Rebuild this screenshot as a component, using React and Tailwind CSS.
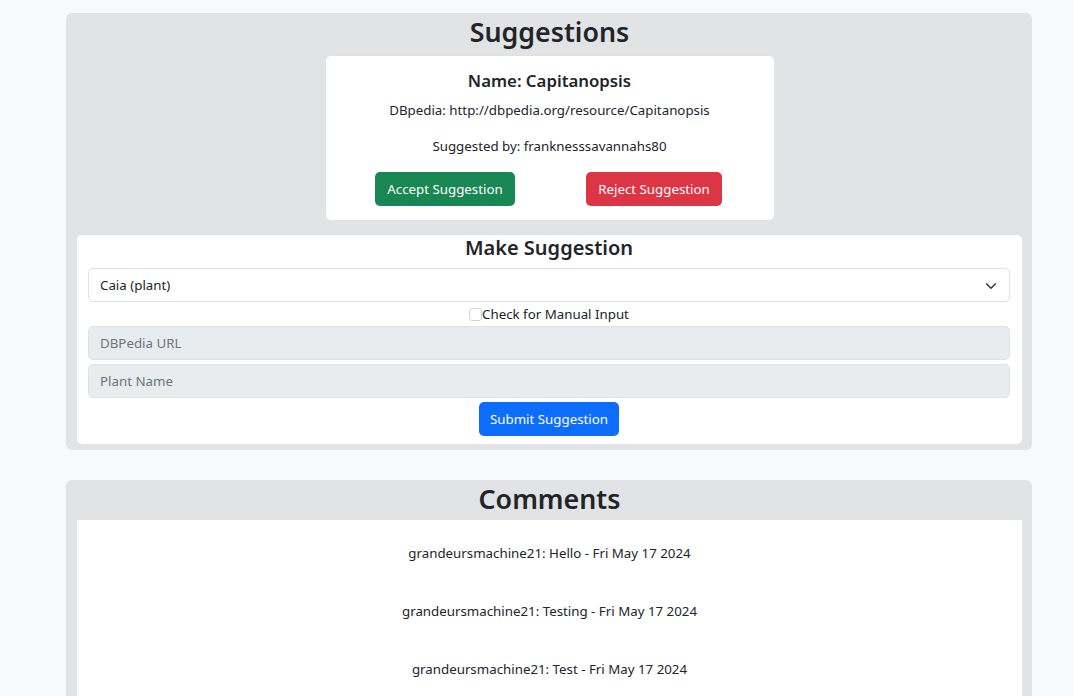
import React from 'react';

const comments = [
  'grandeursmachine21: Hello - Fri May 17 2024',
  'grandeursmachine21: Testing - Fri May 17 2024',
  'grandeursmachine21: Test - Fri May 17 2024',
];

function Chevron() {
  return (
    <svg width="16" height="12" viewBox="0 0 16 16" fill="none" stroke="#343a40" strokeWidth="2" strokeLinecap="round" strokeLinejoin="round">
      <path d="m2 5 6 6 6-6" />
    </svg>
  );
}

function SuggestionCard() {
  return (
    <div className="mx-auto w-[450px] bg-white border border-[#dee2e6] rounded-[6px] pt-[14px] pb-[14px] px-[15px] text-center">
      <h5 className="text-[16.8px] leading-[21px] font-semibold">Name: Capitanopsis</h5>
      <p className="mt-[9px] text-[13.3px] leading-[21px]">DBpedia: http://dbpedia.org/resource/Capitanopsis</p>
      <p className="mt-[15px] text-[13.3px] leading-[21px]">Suggested by: franknesssavannahs80</p>
      <div className="mt-[15px] grid grid-cols-2">
        <div className="flex justify-center">
          <button className="h-[34px] pt-[2px] px-[12px] rounded-[5px] bg-[#198754] text-white text-[13.3px]">Accept Suggestion</button>
        </div>
        <div className="flex justify-center">
          <button className="h-[34px] pt-[2px] px-[12px] rounded-[5px] bg-[#dc3545] text-white text-[13.3px]">Reject Suggestion</button>
        </div>
      </div>
    </div>
  );
}

function MakeSuggestion() {
  return (
    <div className="bg-white rounded-[5px] pl-[11px] pr-[12px] pb-[8px]">
      <h4 className="text-center text-[20px] leading-[25px] font-semibold">Make Suggestion</h4>
      <div className="mt-[8px] h-[34px] pt-[2px] border border-[#dee2e6] rounded-[5px] flex items-center justify-between pl-[11px] pr-[10px] text-[13.3px]">
        <span>Caia (plant)</span>
        <Chevron />
      </div>
      <div className="h-[24px] pt-[1px] flex items-center justify-center text-[13.3px]">
        <span className="w-[13px] h-[13px] border border-[#ced4da] rounded-[3px] bg-white"></span>
        <span>Check for Manual Input</span>
      </div>
      <div className="h-[34px] pt-[2px] border border-[#dee2e6] rounded-[5px] bg-[#e9ecef] flex items-center pl-[11px] text-[13.3px] text-[#6c757d]">DBPedia URL</div>
      <div className="mt-[4px] h-[34px] pt-[2px] border border-[#dee2e6] rounded-[5px] bg-[#e9ecef] flex items-center pl-[11px] text-[13.3px] text-[#6c757d]">Plant Name</div>
      <div className="mt-[4px] flex justify-center">
        <button className="h-[34px] pt-[2px] px-[11px] rounded-[5px] bg-[#0d6efd] text-white text-[13.3px]">Submit Suggestion</button>
      </div>
    </div>
  );
}

export default function App() {
  return (
    <div className="min-h-[696px] bg-[#f8f9fa] text-[#212529] pt-[13px]" style={{ fontFamily: '"Noto Sans", "Open Sans", sans-serif' }}>
      <div className="ml-[66px] w-[966px] bg-[#e2e3e5] rounded-[6px] pl-[11px] pr-[10px] pb-[6px]">
        <h2 className="pt-[2px] h-[42px] leading-[34px] text-center text-[26.8px] font-semibold">Suggestions</h2>
        <SuggestionCard />
        <div className="mt-[14px]">
          <MakeSuggestion />
        </div>
      </div>
      <div className="mt-[30px] ml-[66px] w-[966px] bg-[#e2e3e5] rounded-t-[6px] pl-[11px] pr-[10px]">
        <h2 className="pt-[2px] h-[40px] leading-[34px] text-center text-[26.8px] font-semibold">Comments</h2>
        <div className="bg-white pt-[4px] pb-[20px]">
          {comments.map((c) => (
            <p key={c} className="py-[18.5px] text-center text-[13.3px] leading-[21px]">{c}</p>
          ))}
        </div>
      </div>
    </div>
  );
}
